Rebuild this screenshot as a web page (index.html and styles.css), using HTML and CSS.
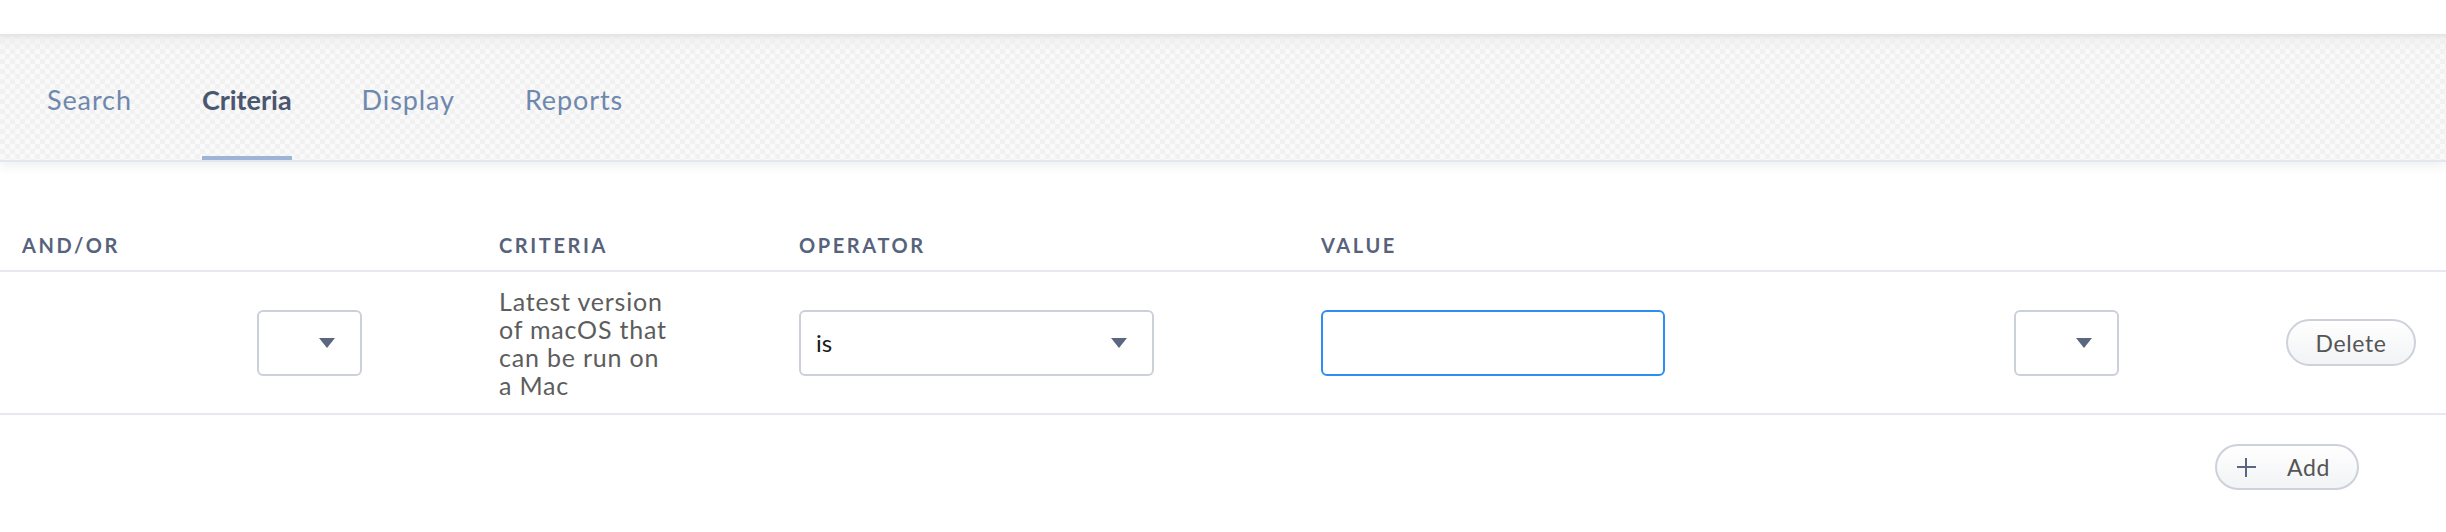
FILE: index.html
```html
<!DOCTYPE html>
<html lang="en">
<head>
<meta charset="utf-8">
<title>Criteria</title>
<link rel="stylesheet" href="styles.css">
</head>
<body>
<nav class="tabs">
  <a class="tab">Search</a>
  <a class="tab active">Criteria</a>
  <a class="tab">Display</a>
  <a class="tab">Reports</a>
</nav>

<div class="grid head">
  <div class="th">AND/OR</div>
  <div class="th"></div>
  <div class="th">Criteria</div>
  <div class="th">Operator</div>
  <div class="th">Value</div>
  <div class="th"></div>
  <div class="th"></div>
</div>

<div class="grid body">
  <div class="cell"></div>
  <div class="cell"><div class="select small"><span class="val"></span><span class="caret"></span></div></div>
  <div class="cell"><div class="crit">Latest version<br>of macOS that<br>can be run on<br>a Mac</div></div>
  <div class="cell"><div class="select wide"><span class="val">is</span><span class="caret"></span></div></div>
  <div class="cell"><div class="input"></div></div>
  <div class="cell"><div class="select small"><span class="val"></span><span class="caret"></span></div></div>
  <div class="cell"><button class="pill delete">Delete</button></div>
</div>

<div class="actions">
  <button class="pill add"><span class="plus"></span><span>Add</span></button>
</div>
</body>
</html>
```

FILE: styles.css
```css
* { box-sizing: border-box; }
html, body { margin: 0; padding: 0; background: #fff; }
body {
  font-family: Lato, "Open Sans", sans-serif;
  color: #555;
}

.tabs {
  margin-top: 34px;
  height: 128px;
  display: flex;
  align-items: stretch;
  padding-left: 12px;
  background:
    linear-gradient(to bottom, rgba(226,226,226,1) 0px, rgba(238,238,238,0.6) 5px, rgba(248,248,248,0) 18px),
    repeating-conic-gradient(#f1f1f1 0 25%, #f9f9f9 0 50%) 0 0 / 10px 10px;
  border-bottom: 2px solid #e3e8ef;
  box-shadow: 0 5px 10px rgba(0,0,0,0.06);
}
.tab {
  display: flex;
  align-items: center;
  padding: 4px 35px 0;
  font-size: 27px;
  letter-spacing: 0.9px;
  color: #6f88ae;
  position: relative;
}
.tab.active {
  color: #4b5670;
  font-weight: 700;
  letter-spacing: 0;
}
.tab.active::after {
  content: "";
  position: absolute;
  left: 35px;
  right: 35px;
  bottom: 0;
  height: 4px;
  background: #9db4d4;
}

.grid {
  display: grid;
  grid-template-columns: 235px 242px 300px 522px 693px 272px 130px;
  padding-left: 22px;
}
.head {
  margin-top: 71px;
  padding-bottom: 13px;
  border-bottom: 2px solid #e6e9ef;
}
.th {
  font-size: 20px;
  line-height: 24px;
  font-weight: 700;
  letter-spacing: 2.6px;
  text-transform: uppercase;
  color: #57637c;
}
.body {
  height: 143px;
  align-items: center;
  border-bottom: 2px solid #e6e9ef;
}
.cell { display: flex; align-items: center; }

.select {
  height: 66px;
  border: 2px solid #cbd0da;
  border-radius: 6px;
  background: #fff;
  display: flex;
  align-items: center;
  justify-content: space-between;
  padding: 0 25px 0 15px;
}
.select.small { width: 105px; }
.select.wide { width: 355px; }
.val { font-size: 24px; color: #1a1a1a; }
.caret {
  width: 0; height: 0;
  border-left: 8px solid transparent;
  border-right: 8px solid transparent;
  border-top: 10px solid #5b6680;
}
.crit {
  white-space: nowrap;
  font-size: 25px;
  line-height: 28px;
  letter-spacing: 0.8px;
  color: #5d5d5d;
}
.input {
  width: 344px;
  height: 66px;
  border: 2px solid #2d8df2;
  border-radius: 6px;
  background: #fff;
}

.pill {
  font-family: Lato, "Open Sans", sans-serif;
  border: 2px solid #cdd1db;
  border-radius: 24px;
  background: linear-gradient(to bottom, #ffffff, #f2f3f5);
  color: #555;
  font-size: 23px;
  letter-spacing: 0.6px;
  height: 47px;
  padding: 0;
}
.delete { width: 130px; }

.actions {
  display: flex;
  justify-content: flex-end;
  padding: 29px 87px 0 0;
}
.add {
  width: 144px;
  height: 46px;
  display: flex;
  align-items: center;
  padding-left: 20px;
}
.plus {
  position: relative;
  width: 19px;
  height: 19px;
  margin-right: 31px;
}
.plus::before, .plus::after {
  content: "";
  position: absolute;
  background: #5b6680;
}
.plus::before { left: 0; right: 0; top: 8px; height: 2px; }
.plus::after { top: 0; bottom: 0; left: 8px; width: 2px; }
```
